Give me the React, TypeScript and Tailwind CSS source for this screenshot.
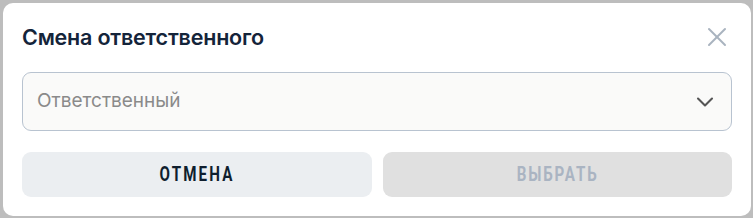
import { X, ChevronDown } from "lucide-react";

export default function App() {
  return (
    <div className="h-[218px] w-[753px] bg-[#bdbdbd] p-[3px] pr-[2px] pb-[2px]">
      <div className="flex h-full flex-col rounded-[10px] bg-white px-[19px] pt-[18px] font-['Inter',sans-serif]">
        <div className="flex h-[32px] items-center justify-between">
          <h2 className="text-[21.5px] font-semibold tracking-[-0.2px] text-[#14243a]">
            Смена ответственного
          </h2>
          <button className="mr-[-1px] text-[#a9b3bf]">
            <X className="h-[32px] w-[32px]" strokeWidth={1.5} />
          </button>
        </div>
        <div className="mt-[19px] flex h-[59px] items-center justify-between rounded-[9px] border border-[#b8c3d0] bg-[#fafaf9] pl-[14px] pr-[12px]">
          <span className="text-[19px] text-[#8a8a8a]">Ответственный</span>
          <ChevronDown className="h-[28px] w-[28px] text-[#555]" strokeWidth={1.8} />
        </div>
        <div className="mt-[21px] grid grid-cols-2 gap-[11px] font-['Roboto',sans-serif]">
          <button className="flex h-[45px] items-center justify-center rounded-[9px] bg-[#ebeef1] text-[#0f1e2e]">
            <span className="inline-block scale-x-[0.72] text-[21px] font-bold tracking-[3px]">ОТМЕНА</span>
          </button>
          <button className="flex h-[45px] items-center justify-center rounded-[9px] bg-[#e0e0e0] text-[#aab4c2]">
            <span className="inline-block scale-x-[0.72] text-[21px] font-bold tracking-[2.5px]">ВЫБРАТЬ</span>
          </button>
        </div>
      </div>
    </div>
  );
}
